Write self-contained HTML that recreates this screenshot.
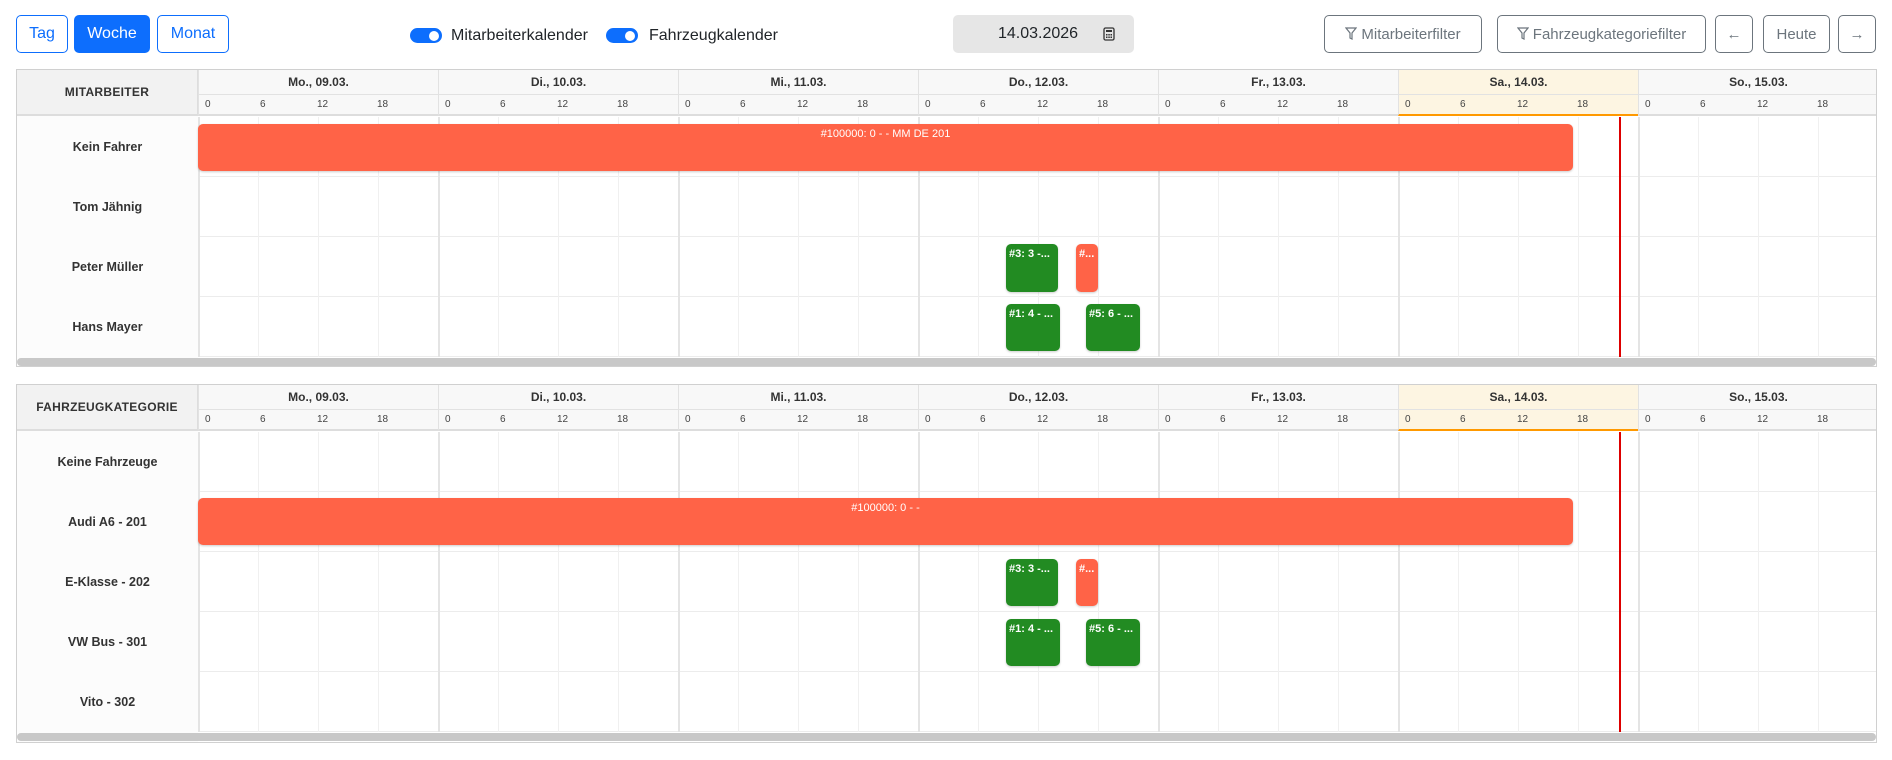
<!DOCTYPE html>
<html><head><meta charset="utf-8"><style>
*{box-sizing:border-box;margin:0;padding:0}
body{width:1892px;height:760px;background:#fff;font-family:"Liberation Sans","DejaVu Sans",sans-serif;position:relative;overflow:hidden;color:#212529}
.btn{position:absolute;top:15px;height:38px;border:1px solid #0d6efd;border-radius:5px;color:#0d6efd;font-size:16px;display:flex;align-items:center;justify-content:center;background:#fff}
.btn.act{background:#0d6efd;color:#fff}
.gb{position:absolute;top:15px;height:38px;border:1px solid #6c757d;border-radius:5px;color:#6c757d;font-size:15px;display:flex;align-items:center;justify-content:center;background:#fff}
.tg{position:absolute;top:28px;width:32px;height:15px;border-radius:8px;background:#0d6efd}
.tg::after{content:"";position:absolute;right:3px;top:2.5px;width:10px;height:10px;border-radius:50%;background:#fff}
.tl{position:absolute;top:26px;font-size:16px;line-height:20px;color:#212529}
.cal{position:absolute;left:16px;width:1861px;border:1px solid #d0d0d0;overflow:hidden}
.lab{position:absolute;left:0;top:0;width:181px;background:#fcfcfc;height:100%}
.labh{position:absolute;left:0;top:0;width:181px;height:46px;background:#f2f2f2;border-bottom:2px solid #ddd;border-right:1px solid #ddd;font-size:12px;font-weight:bold;color:#333;display:flex;align-items:center;justify-content:center;letter-spacing:.3px}
.rl{position:absolute;left:0;width:181px;height:60px;display:flex;align-items:center;justify-content:center;font-size:12.5px;font-weight:bold;color:#333}
.day{position:absolute;top:0;width:240px;height:25px;border-left:1px solid #e2e2e2;border-bottom:1px solid #e2e2e2;background:#f8f8f8;font-size:12px;font-weight:bold;text-align:center;line-height:25px;color:#333}
.hrs{position:absolute;top:25px;width:240px;height:21px;border-left:1px solid #e2e2e2;background:#f8f8f8;border-bottom:2px solid #ddd;font-size:10px;color:#444}
.hrs span{position:absolute;top:4px}
.sat{background:#fdf5e2}
.hrs.sat{border-bottom:2px solid #f90}
.grid{position:absolute;left:181px;right:0;background:
repeating-linear-gradient(90deg,#e4e4e4 0 2px,transparent 2px 240px),
repeating-linear-gradient(90deg,transparent 0 60px,#f0f0f0 60px 61px,transparent 61px 120px,#f0f0f0 120px 121px,transparent 121px 180px,#f0f0f0 180px 181px,transparent 181px 240px),
repeating-linear-gradient(180deg,transparent 0 59px,#ececec 59px 60px)}
.ev{position:absolute;border-radius:5px;color:#fff;font-size:11px;font-weight:bold;padding:4px 3px;white-space:nowrap;overflow:hidden;box-shadow:0 1px 2px rgba(0,0,0,.2)}
.r{background:#ff6347}.g{background:#228b22}
.ev.r.w{font-weight:normal}
.now{position:absolute;left:1602px;width:2px;background:#d00}
.sb{position:absolute;left:0;right:0;height:8px;background:#c8c8c8;border-radius:4px}
</style></head><body>
<div class="btn" style="left:16px;width:52px">Tag</div>
<div class="btn act" style="left:74px;width:76px">Woche</div>
<div class="btn" style="left:157px;width:72px">Monat</div>
<div class="tg" style="left:410px"></div><div class="tl" style="left:451px">Mitarbeiterkalender</div>
<div class="tg" style="left:606px"></div><div class="tl" style="left:649px">Fahrzeugkalender</div>
<div style="position:absolute;left:953px;top:15px;width:181px;height:38px;background:#e6e6e6;border-radius:5px;font-size:16px;line-height:38px;padding-left:45px">14.03.2026
<svg style="position:absolute;left:150px;top:12px" width="12" height="14" viewBox="0 0 12 14"><rect x="1" y="1" width="10" height="12" rx="1.5" fill="none" stroke="#333" stroke-width="1.3"/><rect x="3" y="3" width="6" height="2" fill="#333"/><g fill="#333"><rect x="3" y="7" width="1.5" height="1.5"/><rect x="5.3" y="7" width="1.5" height="1.5"/><rect x="7.5" y="7" width="1.5" height="1.5"/><rect x="3" y="9.5" width="1.5" height="1.5"/><rect x="5.3" y="9.5" width="1.5" height="1.5"/><rect x="7.5" y="9.5" width="1.5" height="1.5"/></g></svg></div>
<div class="gb" style="left:1324px;width:158px"><svg width="12" height="14" viewBox="0 0 12 14" style="margin-right:4px"><path d="M1 1h10L7 6v6l-2-1V6z" fill="none" stroke="#6c757d" stroke-width="1.2"/></svg>Mitarbeiterfilter</div>
<div class="gb" style="left:1497px;width:209px"><svg width="12" height="14" viewBox="0 0 12 14" style="margin-right:4px"><path d="M1 1h10L7 6v6l-2-1V6z" fill="none" stroke="#6c757d" stroke-width="1.2"/></svg>Fahrzeugkategoriefilter</div>
<div class="gb" style="left:1715px;width:38px">←</div>
<div class="gb" style="left:1763px;width:67px">Heute</div>
<div class="gb" style="left:1838px;width:38px">→</div>

<!-- Calendar 1 -->
<div class="cal" style="top:69px;height:298px">
<div class="lab"></div><div class="labh">MITARBEITER</div>
<div class="day" style="left:181px">Mo., 09.03.</div><div class="day" style="left:421px">Di., 10.03.</div><div class="day" style="left:661px">Mi., 11.03.</div><div class="day" style="left:901px">Do., 12.03.</div><div class="day" style="left:1141px">Fr., 13.03.</div><div class="day sat" style="left:1381px">Sa., 14.03.</div><div class="day" style="left:1621px">So., 15.03.</div>
<div class="hrs" style="left:181px"><span style="left:6px">0</span><span style="left:61px">6</span><span style="left:118px">12</span><span style="left:178px">18</span></div>
<div class="hrs" style="left:421px"><span style="left:6px">0</span><span style="left:61px">6</span><span style="left:118px">12</span><span style="left:178px">18</span></div>
<div class="hrs" style="left:661px"><span style="left:6px">0</span><span style="left:61px">6</span><span style="left:118px">12</span><span style="left:178px">18</span></div>
<div class="hrs" style="left:901px"><span style="left:6px">0</span><span style="left:61px">6</span><span style="left:118px">12</span><span style="left:178px">18</span></div>
<div class="hrs" style="left:1141px"><span style="left:6px">0</span><span style="left:61px">6</span><span style="left:118px">12</span><span style="left:178px">18</span></div>
<div class="hrs sat" style="left:1381px"><span style="left:6px">0</span><span style="left:61px">6</span><span style="left:118px">12</span><span style="left:178px">18</span></div>
<div class="hrs" style="left:1621px"><span style="left:6px">0</span><span style="left:61px">6</span><span style="left:118px">12</span><span style="left:178px">18</span></div>
<div class="grid" style="top:47px;height:240px"></div>
<div class="rl" style="top:47px">Kein Fahrer</div>
<div class="rl" style="top:107px">Tom Jähnig</div>
<div class="rl" style="top:167px">Peter Müller</div>
<div class="rl" style="top:227px">Hans Mayer</div>
<div class="ev r w" style="left:181px;top:54px;width:1375px;height:47px;text-align:center">#100000: 0 - - MM DE 201</div>
<div class="ev g" style="left:989px;top:174px;width:52px;height:48px">#3: 3 -...</div>
<div class="ev r" style="left:1059px;top:174px;width:22px;height:48px">#...</div>
<div class="ev g" style="left:989px;top:234px;width:54px;height:47px">#1: 4 - ...</div>
<div class="ev g" style="left:1069px;top:234px;width:54px;height:47px">#5: 6 - ...</div>
<div class="now" style="top:47px;height:240px"></div>
<div class="sb" style="top:288px"></div>
</div>

<!-- Calendar 2 -->
<div class="cal" style="top:384px;height:359px">
<div class="lab"></div><div class="labh">FAHRZEUGKATEGORIE</div>
<div class="day" style="left:181px">Mo., 09.03.</div><div class="day" style="left:421px">Di., 10.03.</div><div class="day" style="left:661px">Mi., 11.03.</div><div class="day" style="left:901px">Do., 12.03.</div><div class="day" style="left:1141px">Fr., 13.03.</div><div class="day sat" style="left:1381px">Sa., 14.03.</div><div class="day" style="left:1621px">So., 15.03.</div>
<div class="hrs" style="left:181px"><span style="left:6px">0</span><span style="left:61px">6</span><span style="left:118px">12</span><span style="left:178px">18</span></div>
<div class="hrs" style="left:421px"><span style="left:6px">0</span><span style="left:61px">6</span><span style="left:118px">12</span><span style="left:178px">18</span></div>
<div class="hrs" style="left:661px"><span style="left:6px">0</span><span style="left:61px">6</span><span style="left:118px">12</span><span style="left:178px">18</span></div>
<div class="hrs" style="left:901px"><span style="left:6px">0</span><span style="left:61px">6</span><span style="left:118px">12</span><span style="left:178px">18</span></div>
<div class="hrs" style="left:1141px"><span style="left:6px">0</span><span style="left:61px">6</span><span style="left:118px">12</span><span style="left:178px">18</span></div>
<div class="hrs sat" style="left:1381px"><span style="left:6px">0</span><span style="left:61px">6</span><span style="left:118px">12</span><span style="left:178px">18</span></div>
<div class="hrs" style="left:1621px"><span style="left:6px">0</span><span style="left:61px">6</span><span style="left:118px">12</span><span style="left:178px">18</span></div>
<div class="grid" style="top:47px;height:300px"></div>
<div class="rl" style="top:47px">Keine Fahrzeuge</div>
<div class="rl" style="top:107px">Audi A6 - 201</div>
<div class="rl" style="top:167px">E-Klasse - 202</div>
<div class="rl" style="top:227px">VW Bus - 301</div>
<div class="rl" style="top:287px">Vito - 302</div>
<div class="ev r w" style="left:181px;top:113px;width:1375px;height:47px;text-align:center">#100000: 0 - -</div>
<div class="ev g" style="left:989px;top:174px;width:52px;height:47px">#3: 3 -...</div>
<div class="ev r" style="left:1059px;top:174px;width:22px;height:47px">#...</div>
<div class="ev g" style="left:989px;top:234px;width:54px;height:47px">#1: 4 - ...</div>
<div class="ev g" style="left:1069px;top:234px;width:54px;height:47px">#5: 6 - ...</div>
<div class="now" style="top:47px;height:300px"></div>
<div class="sb" style="top:348px"></div>
</div>
</body></html>
